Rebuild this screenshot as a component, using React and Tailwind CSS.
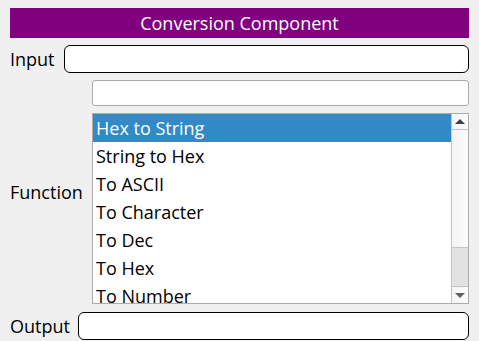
import React, { useState } from "react";

const functions = [
  "Hex to String",
  "String to Hex",
  "To ASCII",
  "To Character",
  "To Dec",
  "To Hex",
  "To Number",
];

const App = () => {
  const [selected, setSelected] = useState(0);

  return (
    <div
      className="w-[479px] h-[341px] bg-[#f0f0f0] px-[10px] pt-[8px] overflow-hidden text-black"
      style={{ fontFamily: '"Open Sans", "Noto Sans", sans-serif' }}
    >
      <div className="h-[30px] bg-[#800080] text-white text-[18px] leading-[30px] text-center">
        Conversion Component
      </div>

      {/* input row */}
      <div className="mt-[7px] flex items-center">
        <span className="w-[54px] text-[18px]">Input</span>
        <div className="flex-1 h-[28px] bg-white border border-black rounded-[6px]"></div>
      </div>

      {/* secondary field */}
      <div className="ml-[82px] mt-[7px] h-[26px] bg-white border border-[#ababab] rounded-[3px]"></div>

      {/* function list */}
      <div className="mt-[7px] flex items-start">
        <span className="w-[82px] mt-[66px] text-[18px]">Function</span>
        <div className="flex-1 h-[191px] bg-white border border-[#ababab] flex overflow-hidden">
          <div className="flex-1 overflow-hidden">
            {functions.map((f, i) => (
              <div
                key={f}
                onClick={() => setSelected(i)}
                className={
                  "h-[28px] leading-[28px] pl-[3px] text-[18px] " +
                  (selected === i ? "bg-[#3189c6] text-white" : "")
                }
              >
                {f}
              </div>
            ))}
          </div>
          <div className="w-[17px] flex flex-col border-l border-[#c4c4c4] bg-gradient-to-r from-[#f4f4f4] to-[#fcfcfc]">
            <div className="h-[16px] border-b border-[#c4c4c4] flex items-center justify-center">
              <div className="w-0 h-0 border-l-[5px] border-r-[5px] border-b-[5px] border-l-transparent border-r-transparent border-b-[#404040]"></div>
            </div>
            <div className="flex-1 flex flex-col justify-end">
              <div className="h-[40px] bg-[#e2e2e2] border-y border-[#c4c4c4]"></div>
            </div>
            <div className="h-[16px] flex items-center justify-center">
              <div className="w-0 h-0 border-l-[5px] border-r-[5px] border-t-[5px] border-l-transparent border-r-transparent border-t-[#606060]"></div>
            </div>
          </div>
        </div>
      </div>

      {/* output row */}
      <div className="mt-[8px] flex items-center">
        <span className="w-[68px] text-[18px]">Output</span>
        <div className="flex-1 h-[28px] bg-white border border-black rounded-[6px]"></div>
      </div>
    </div>
  );
};

export default App;
